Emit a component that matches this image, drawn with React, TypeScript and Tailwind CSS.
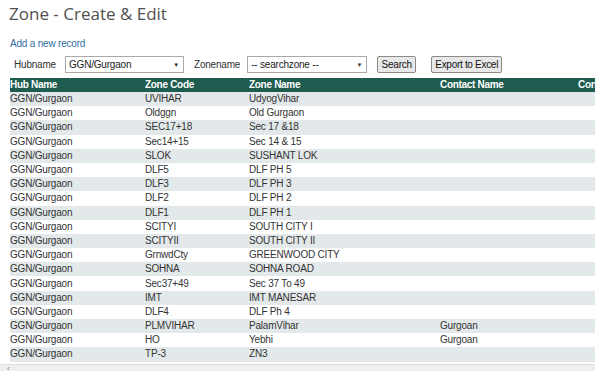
const rows: [string, string, string, string][] = [
  ["GGN/Gurgaon", "UVIHAR", "UdyogVihar", ""],
  ["GGN/Gurgaon", "Oldggn", "Old Gurgaon", ""],
  ["GGN/Gurgaon", "SEC17+18", "Sec 17 &18", ""],
  ["GGN/Gurgaon", "Sec14+15", "Sec 14 & 15", ""],
  ["GGN/Gurgaon", "SLOK", "SUSHANT LOK", ""],
  ["GGN/Gurgaon", "DLF5", "DLF PH 5", ""],
  ["GGN/Gurgaon", "DLF3", "DLF PH 3", ""],
  ["GGN/Gurgaon", "DLF2", "DLF PH 2", ""],
  ["GGN/Gurgaon", "DLF1", "DLF PH 1", ""],
  ["GGN/Gurgaon", "SCITYI", "SOUTH CITY I", ""],
  ["GGN/Gurgaon", "SCITYII", "SOUTH CITY II", ""],
  ["GGN/Gurgaon", "GrnwdCty", "GREENWOOD CITY", ""],
  ["GGN/Gurgaon", "SOHNA", "SOHNA ROAD", ""],
  ["GGN/Gurgaon", "Sec37+49", "Sec 37 To 49", ""],
  ["GGN/Gurgaon", "IMT", "IMT MANESAR", ""],
  ["GGN/Gurgaon", "DLF4", "DLF Ph 4", ""],
  ["GGN/Gurgaon", "PLMVIHAR", "PalamVihar", "Gurgoan"],
  ["GGN/Gurgaon", "HO", "Yebhi", "Gurgoan"],
  ["GGN/Gurgaon", "TP-3", "ZN3", ""],
];

const cols = "grid grid-cols-[135px_104px_191px_138px_140px]";

function Select({ value, width }: { value: string; width: string }) {
  return (
    <div
      className={`flex h-[17px] items-center justify-between border border-[#a9a9a9] bg-white pl-[3px] pr-[4px] text-[10px] tracking-[-0.2px] text-[#222] ${width}`}
    >
      <span>{value}</span>
      <span className="text-[6px] leading-none text-[#333]">▼</span>
    </div>
  );
}

export default function App() {
  return (
    <div className="h-[371px] w-[595px] overflow-hidden bg-white font-['Liberation_Sans',Arial,sans-serif]">
      <h1 className="pl-[9px] pt-[2px] font-['Open_Sans',sans-serif] text-[17px] leading-[24px] text-[#505050]">
        Zone - Create &amp; Edit
      </h1>

      <div className="mt-[11px] pl-[10px] text-[10px] leading-[14px] tracking-[-0.2px] text-[#2f6fa3]">
        Add a new record
      </div>

      <div className="mt-[4px] flex h-[19px] items-center pl-[14px] text-[10px] tracking-[-0.2px] text-[#333]">
        <span className="mr-[9px]">Hubname</span>
        <Select value="GGN/Gurgaon" width="w-[119px]" />
        <span className="ml-[10px] mr-[7px]">Zonename</span>
        <Select value="-- searchzone --" width="w-[120px]" />
        <button className="ml-[10px] h-[17px] w-[39px] whitespace-nowrap rounded-[2px] border border-[#8a8a8a] bg-[#e8e8e8] text-[10px] leading-none tracking-[-0.2px] text-[#111]">
          Search
        </button>
        <button className="ml-[15px] h-[17px] w-[71px] whitespace-nowrap rounded-[2px] border border-[#8a8a8a] bg-[#e8e8e8] text-[10px] leading-none tracking-[-0.3px] text-[#111]">
          Export to Excel
        </button>
      </div>

      <div className="ml-[10px] mt-[4px] w-[708px] text-[10px] tracking-[-0.2px]">
        <div
          className={`${cols} h-[14px] items-center bg-[#1d5c4f] font-bold leading-[14px] tracking-[-0.3px] text-white`}
        >
          <span>Hub Name</span>
          <span>Zone Code</span>
          <span>Zone Name</span>
          <span>Contact Name</span>
          <span>Contact</span>
        </div>
        {rows.map((r, i) => (
          <div
            key={i}
            className={`${cols} h-[14.2px] items-center leading-[14px] text-[#333] ${
              i % 2 === 0 ? "bg-[#e3e9ea]" : "bg-white"
            }`}
          >
            <span>{r[0]}</span>
            <span>{r[1]}</span>
            <span>{r[2]}</span>
            <span>{r[3]}</span>
            <span />
          </div>
        ))}
      </div>

      <div className="mt-[2px] flex h-[10px] items-start border-t border-[#dddddd] bg-[#efefef] pl-[7px] text-[8px] leading-[8px] text-[#777]">
        ‹
      </div>
    </div>
  );
}
